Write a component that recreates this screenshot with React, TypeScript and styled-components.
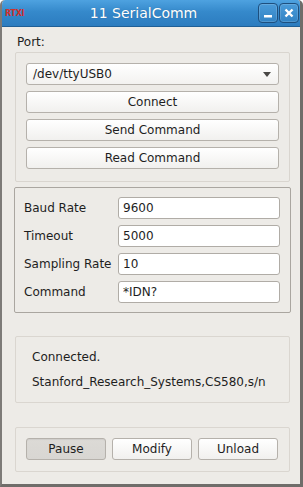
import React from 'react'
import styled, { createGlobalStyle } from 'styled-components'

const GlobalStyle = createGlobalStyle`
  html, body {
    margin: 0;
    padding: 0;
    background: #ffffff;
  }
  * {
    box-sizing: border-box;
  }
`

const font = `"DejaVu Sans", "Liberation Sans", sans-serif`

export default function App() {
  return (
    <>
      <GlobalStyle />
      <Window>
        <TitleBar>
          <Logo>RTXI</Logo>
          <Title>11 SerialComm</Title>
          <TitleButtons>
            <TitleButton aria-label='minimize'>
              <svg width='10' height='10' viewBox='0 0 10 10'>
                <rect x='1' y='7' width='8' height='2.5' fill='#ffffff' />
              </svg>
            </TitleButton>
            <TitleButton aria-label='close'>
              <svg width='10' height='10' viewBox='0 0 10 10'>
                <path d='M1.5 1.5 L8.5 8.5 M8.5 1.5 L1.5 8.5' stroke='#ffffff' strokeWidth='2.4' />
              </svg>
            </TitleButton>
          </TitleButtons>
        </TitleBar>

        <Body>
          <PortLabel>Port:</PortLabel>
          <Group>
            <Combo>
              <span>/dev/ttyUSB0</span>
              <Arrow />
            </Combo>
            <Button>Connect</Button>
            <Button>Send Command</Button>
            <Button>Read Command</Button>
          </Group>

          <ParamGroup>
            <Field>Baud Rate</Field>
            <Input defaultValue='9600' />
            <Field>Timeout</Field>
            <Input defaultValue='5000' />
            <Field>Sampling Rate</Field>
            <Input defaultValue='10' />
            <Field>Command</Field>
            <Input defaultValue='*IDN?' />
          </ParamGroup>

          <StatusGroup>
            <StatusLine>Connected.</StatusLine>
            <StatusLine>Stanford_Research_Systems,CS580,s/n</StatusLine>
          </StatusGroup>

          <ActionGroup>
            <Button $pressed>Pause</Button>
            <Button>Modify</Button>
            <Button>Unload</Button>
          </ActionGroup>
        </Body>
      </Window>
    </>
  )
}

const Window = styled.div`
  width: 303px;
  height: 487px;
  display: flex;
  flex-direction: column;
  background-color: #edebe7;
  border-left: 2px solid #7d7b78;
  border-right: 3px solid #6f6d6a;
  border-bottom: 3px solid #6f6d6a;
  border-radius: 5px 5px 0 0;
  font-family: ${font};
  font-size: 12px;
  color: #1e1e1e;
  overflow: hidden;
`

const TitleBar = styled.div`
  display: flex;
  align-items: center;
  height: 27px;
  margin: 0 -3px 0 -2px;
  padding: 0 4px 0 5px;
  background: linear-gradient(#4ea2e0, #3589cb 45%, #2c7cbf);
  border-bottom: 1px solid #1f5f96;
  border-radius: 5px 5px 0 0;
  flex-shrink: 0;
`

const Logo = styled.span`
  font-family: "DejaVu Sans", sans-serif;
  font-size: 8px;
  font-weight: bold;
  color: #d0302a;
  width: 24px;
  letter-spacing: -0.3px;
`

const Title = styled.div`
  flex: 1;
  text-align: center;
  color: #ffffff;
  font-size: 14px;
  text-shadow: 0 0 1px rgba(0, 0, 0, 0.25);
`

const TitleButtons = styled.div`
  display: flex;
  gap: 1px;
`

const TitleButton = styled.div`
  width: 20px;
  height: 20px;
  display: flex;
  align-items: center;
  justify-content: center;
  border: 1px solid #1d4f7e;
  border-radius: 4px;
  background: linear-gradient(#4a9bd9, #3283c4);
  box-shadow: inset 0 0 0 1px rgba(255, 255, 255, 0.15);
`

const Body = styled.div`
  flex: 1;
  display: flex;
  flex-direction: column;
  padding: 8px 10px 0 13px;
`

const PortLabel = styled.div`
  height: 17px;
  line-height: 14px;
  padding-left: 2px;
`

const Group = styled.div`
  display: flex;
  flex-direction: column;
  gap: 6px;
  padding: 10px 10px 12px 10px;
  border: 1px solid #d9d5cf;
  border-radius: 2px;
`

const Combo = styled.div`
  height: 22px;
  display: flex;
  align-items: center;
  justify-content: space-between;
  padding: 0 7px 0 6px;
  border: 1px solid #b5b1ab;
  border-radius: 3px;
  background: linear-gradient(#ffffff, #f3f2f0);
`

const Arrow = styled.span`
  width: 0;
  height: 0;
  border-left: 4px solid transparent;
  border-right: 4px solid transparent;
  border-top: 5px solid #4a4846;
`

const Button = styled.div<{ $pressed?: boolean }>`
  height: 22px;
  display: flex;
  align-items: center;
  justify-content: center;
  border: 1px solid #b5b1ab;
  border-radius: 3px;
  background: ${(p) =>
    p.$pressed ? 'linear-gradient(#dcdad6, #d8d6d2)' : 'linear-gradient(#ffffff, #f1f0ee)'};
  box-shadow: ${(p) => (p.$pressed ? 'inset 0 1px 1px rgba(0,0,0,0.06)' : 'none')};
`

const ParamGroup = styled.div`
  display: grid;
  grid-template-columns: 94px 1fr;
  row-gap: 6px;
  align-items: center;
  margin: 5px -1px 0 -1px;
  padding: 9px 10px 9px 9px;
  border: 1px solid #aaa6a0;
  border-radius: 2px;
`

const Field = styled.div`
  line-height: 22px;
`

const Input = styled.input`
  height: 22px;
  width: 100%;
  padding: 0 4px;
  font-family: ${font};
  font-size: 12px;
  color: #1e1e1e;
  background: #ffffff;
  border: 1px solid #b0aca6;
  border-radius: 3px;
  outline: none;
`

const StatusGroup = styled.div`
  display: flex;
  flex-direction: column;
  justify-content: center;
  gap: 10px;
  height: 67px;
  margin-top: 23px;
  padding: 0 16px;
  border: 1px solid #dad6d0;
  border-radius: 2px;
`

const StatusLine = styled.div`
  line-height: 15px;
`

const ActionGroup = styled.div`
  display: grid;
  grid-template-columns: repeat(3, 80px);
  column-gap: 6px;
  height: 45px;
  margin-top: 24px;
  padding: 10px 10px 0 10px;
  border: 1px solid #dad6d0;
  border-radius: 2px;
`
